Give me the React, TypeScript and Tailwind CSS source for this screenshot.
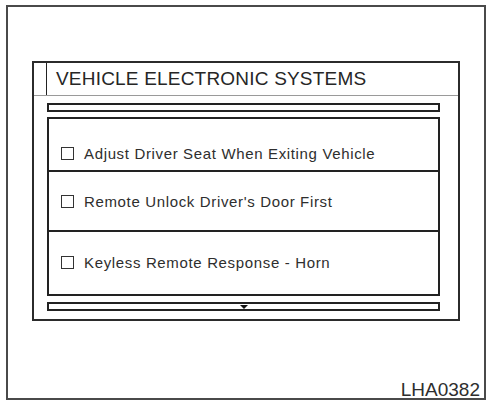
import React from "react";

const font = { fontFamily: '"Liberation Sans", Arial, sans-serif' };

function Option({ label, h, pt, last }: { label: string; h: string; pt: string; last?: boolean }) {
  return (
    <div className={`flex items-start pl-[12px] ${h} ${pt} ${last ? "" : "border-b-2 border-[#222]"}`}>
      <div className="w-[13px] h-[13px] border border-[#333] shrink-0" />
      <span className="ml-[10px] text-[15px] leading-[13px] tracking-[0.65px] text-[#2e2e2e] whitespace-nowrap">
        {label}
      </span>
    </div>
  );
}

export default function App() {
  return (
    <div className="w-[490px] h-[401px] bg-white relative overflow-hidden" style={font}>
      <div className="absolute left-[6px] top-[5px] w-[480px] h-[395px] border-2 border-[#4a4a4a] flex flex-col">
        {/* display panel */}
        <div className="ml-[24px] mt-[54px] w-[428px] h-[260px] border-2 border-[#2b2b2b] flex flex-col">
          <div className="flex h-[33px] border-b border-[#9a9a9a]">
            <div className="w-[13px] border-r border-[#222]" />
            <div className="flex items-center pl-[9px] text-[19px] tracking-[0.2px] text-[#262626] whitespace-nowrap">
              VEHICLE ELECTRONIC SYSTEMS
            </div>
          </div>
          <div className="flex flex-col pl-[13px] pr-[18px] pt-[7px]">
            <div className="h-[9px] border-2 border-[#222]" />
            <div className="mt-[5px] border-2 border-[#222] flex flex-col">
              <Option label="Adjust Driver Seat When Exiting Vehicle" h="h-[53px]" pt="pt-[28px]" />
              <Option label="Remote Unlock Driver's Door First" h="h-[60px]" pt="pt-[23px]" />
              <Option label="Keyless Remote Response - Horn" h="h-[62px]" pt="pt-[24px]" last />
            </div>
            <div className="mt-[6px] h-[9px] border-2 border-[#222] flex items-center justify-center">
              <svg width="8" height="4" viewBox="0 0 8 4">
                <polygon points="0,0 8,0 4,4" fill="#111" />
              </svg>
            </div>
          </div>
        </div>
        <div className="flex-1" />
        <div className="flex justify-end pr-[4px] text-[19px] leading-[16px] text-[#2e2e2e]">LHA0382</div>
      </div>
    </div>
  );
}
